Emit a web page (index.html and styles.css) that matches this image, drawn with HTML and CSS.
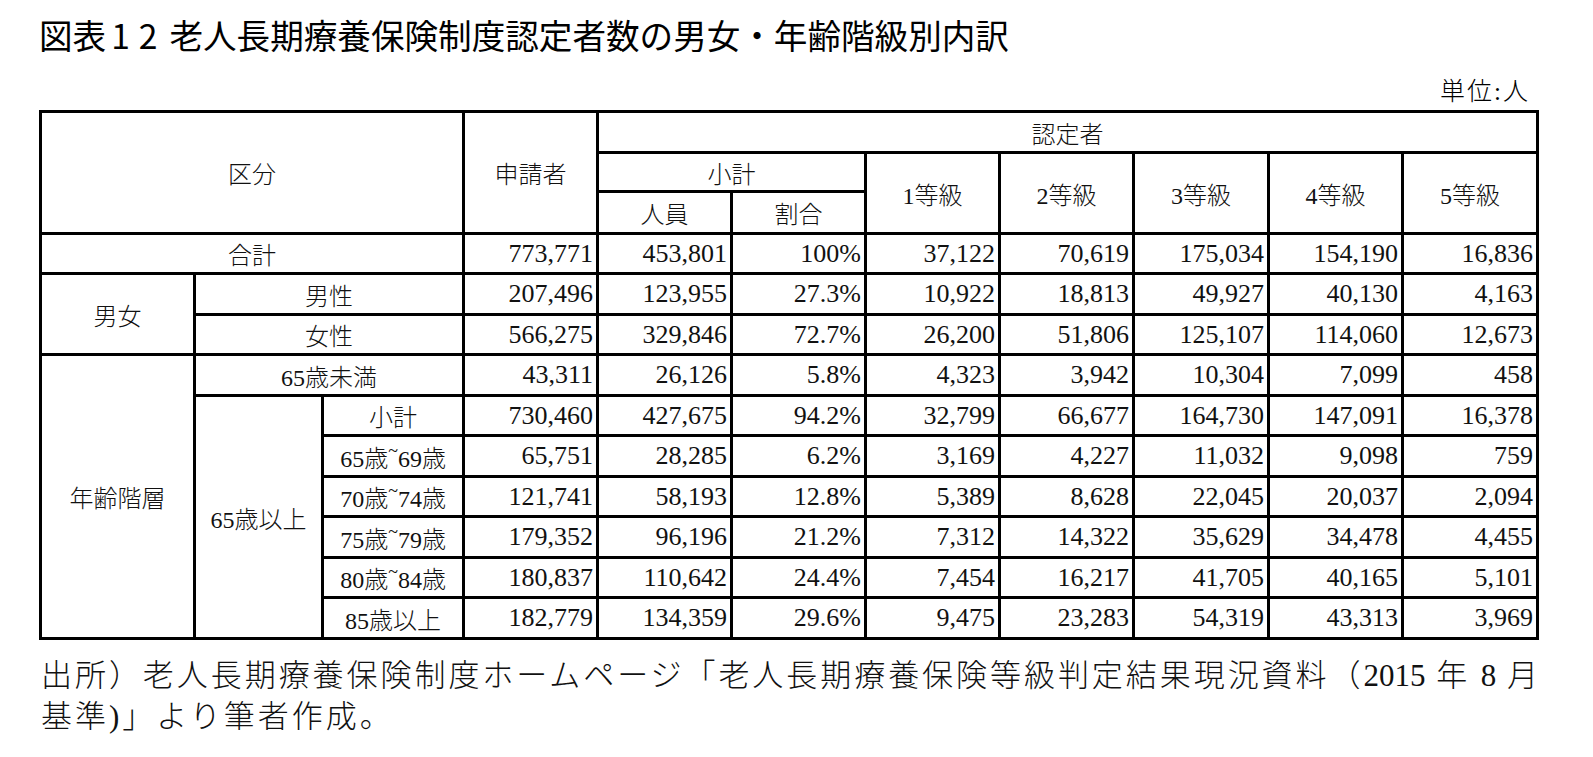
FILE: index.html
```html
<!DOCTYPE html>
<html lang="ja">
<head>
<meta charset="utf-8">
<title>図表12</title>
<link rel="stylesheet" href="styles.css">
</head>
<body>
<div class="page">
  <h1 class="title">図表<span class="fig-no">12</span>老人長期療養保険制度認定者数の男女・年齢階級別内訳</h1>
  <div class="unit">単位:人</div>
  <table class="tbl">
    <colgroup>
      <col class="c1"><col class="c2"><col class="c3"><col class="c4">
      <col class="c5"><col class="c6"><col class="c7"><col class="c8">
      <col class="c9"><col class="c10"><col class="c11">
    </colgroup>
    <thead>
      <tr class="h1">
        <th colspan="3" rowspan="3">区分</th>
        <th rowspan="3">申請者</th>
        <th colspan="7">認定者</th>
      </tr>
      <tr class="h2">
        <th colspan="2">小計</th>
        <th rowspan="2">1等級</th>
        <th rowspan="2">2等級</th>
        <th rowspan="2">3等級</th>
        <th rowspan="2">4等級</th>
        <th rowspan="2">5等級</th>
      </tr>
      <tr class="h3">
        <th class="sub">人員</th>
        <th class="sub">割合</th>
      </tr>
    </thead>
    <tbody>
      <tr class="ra">
        <th colspan="3">合計</th>
        <td>773,771</td><td>453,801</td><td>100%</td><td>37,122</td><td>70,619</td><td>175,034</td><td>154,190</td><td>16,836</td>
      </tr>
      <tr class="rb">
        <th rowspan="2">男女</th>
        <th colspan="2">男性</th>
        <td>207,496</td><td>123,955</td><td>27.3%</td><td>10,922</td><td>18,813</td><td>49,927</td><td>40,130</td><td>4,163</td>
      </tr>
      <tr class="ra">
        <th colspan="2">女性</th>
        <td>566,275</td><td>329,846</td><td>72.7%</td><td>26,200</td><td>51,806</td><td>125,107</td><td>114,060</td><td>12,673</td>
      </tr>
      <tr class="rb">
        <th rowspan="7">年齢階層</th>
        <th colspan="2">65歳未満</th>
        <td>43,311</td><td>26,126</td><td>5.8%</td><td>4,323</td><td>3,942</td><td>10,304</td><td>7,099</td><td>458</td>
      </tr>
      <tr class="ra">
        <th rowspan="6" class="over">65歳以上</th>
        <th>小計</th>
        <td>730,460</td><td>427,675</td><td>94.2%</td><td>32,799</td><td>66,677</td><td>164,730</td><td>147,091</td><td>16,378</td>
      </tr>
      <tr class="rb">
        <th>65歳<span class="tl">~</span>69歳</th>
        <td>65,751</td><td>28,285</td><td>6.2%</td><td>3,169</td><td>4,227</td><td>11,032</td><td>9,098</td><td>759</td>
      </tr>
      <tr class="ra">
        <th>70歳<span class="tl">~</span>74歳</th>
        <td>121,741</td><td>58,193</td><td>12.8%</td><td>5,389</td><td>8,628</td><td>22,045</td><td>20,037</td><td>2,094</td>
      </tr>
      <tr class="rb">
        <th>75歳<span class="tl">~</span>79歳</th>
        <td>179,352</td><td>96,196</td><td>21.2%</td><td>7,312</td><td>14,322</td><td>35,629</td><td>34,478</td><td>4,455</td>
      </tr>
      <tr class="ra">
        <th>80歳<span class="tl">~</span>84歳</th>
        <td>180,837</td><td>110,642</td><td>24.4%</td><td>7,454</td><td>16,217</td><td>41,705</td><td>40,165</td><td>5,101</td>
      </tr>
      <tr class="rb">
        <th>85歳以上</th>
        <td>182,779</td><td>134,359</td><td>29.6%</td><td>9,475</td><td>23,283</td><td>54,319</td><td>43,313</td><td>3,969</td>
      </tr>
    </tbody>
  </table>
  <div class="note">
    <div class="note-l1">出所）老人長期療養保険制度ホームページ「老人長期療養保険等級判定結果現況資料（2015 年 8 月</div>
    <div class="note-l2">基準)」より筆者作成。</div>
  </div>
</div>
</body>
</html>
```
FILE: styles.css
```css
html, body {
  margin: 0;
  padding: 0;
  background: #ffffff;
  color: #000000;
}

.page {
  width: 1500px;
  padding: 15px 0 0 39px;
}

.title {
  margin: 0;
  font-family: "Noto Sans CJK JP", "Noto Sans", sans-serif;
  font-weight: 400;
  font-size: 33.6px;
  line-height: 40px;
  letter-spacing: 0;
  color: #000000;
}

.fig-no {
  display: inline-block;
  padding: 0 3px 0 5px;
  letter-spacing: 9px;
}

.unit {
  margin-top: 24px;
  padding-right: 9px;
  text-align: right;
  font-family: "Liberation Serif", "Noto Sans CJK JP", serif;
  font-weight: 300;
  font-size: 25px;
  line-height: 26px;
  letter-spacing: 2px;
}

.tbl {
  margin-top: 5px;
  width: 1500px;
  table-layout: fixed;
  border-collapse: collapse;
  font-family: "Liberation Serif", "Noto Sans CJK JP", serif;
  color: #111111;
}

.c1 { width: 154px; }
.c2 { width: 128px; }
.c3 { width: 141px; }
.c4 { width: 134px; }
.c5 { width: 134px; }
.c6 { width: 134px; }
.c7 { width: 134px; }
.c8 { width: 134px; }
.c9 { width: 135px; }
.c10 { width: 134px; }
.c11 { width: 135px; }

.tbl th,
.tbl td {
  border: 3px solid #000000;
  padding: 0 3px;
  white-space: nowrap;
  overflow: hidden;
}

.tbl th {
  font-weight: 300;
  font-size: 24px;
  text-align: center;
}

.tbl td {
  font-size: 26px;
  text-align: right;
}

.h1 { height: 41px; }
.h2 { height: 39px; }
.h3 { height: 42px; }
.ra { height: 40px; }
.rb { height: 41px; }

.tl {
  display: inline-block;
  font-size: 18px;
  vertical-align: 10px;
  line-height: 1;
}

.over {
  vertical-align: middle;
  padding-top: 40px;
}

.note {
  width: 1497px;
  margin-top: 15px;
  padding-left: 2px;
  font-family: "Liberation Serif", "Noto Sans CJK JP", serif;
  font-weight: 300;
  font-size: 31px;
  line-height: 41px;
  color: #111111;
}

.note-l1 {
  text-align: justify;
  text-align-last: justify;
}

.note-l2 {
  letter-spacing: 3px;
}
```
